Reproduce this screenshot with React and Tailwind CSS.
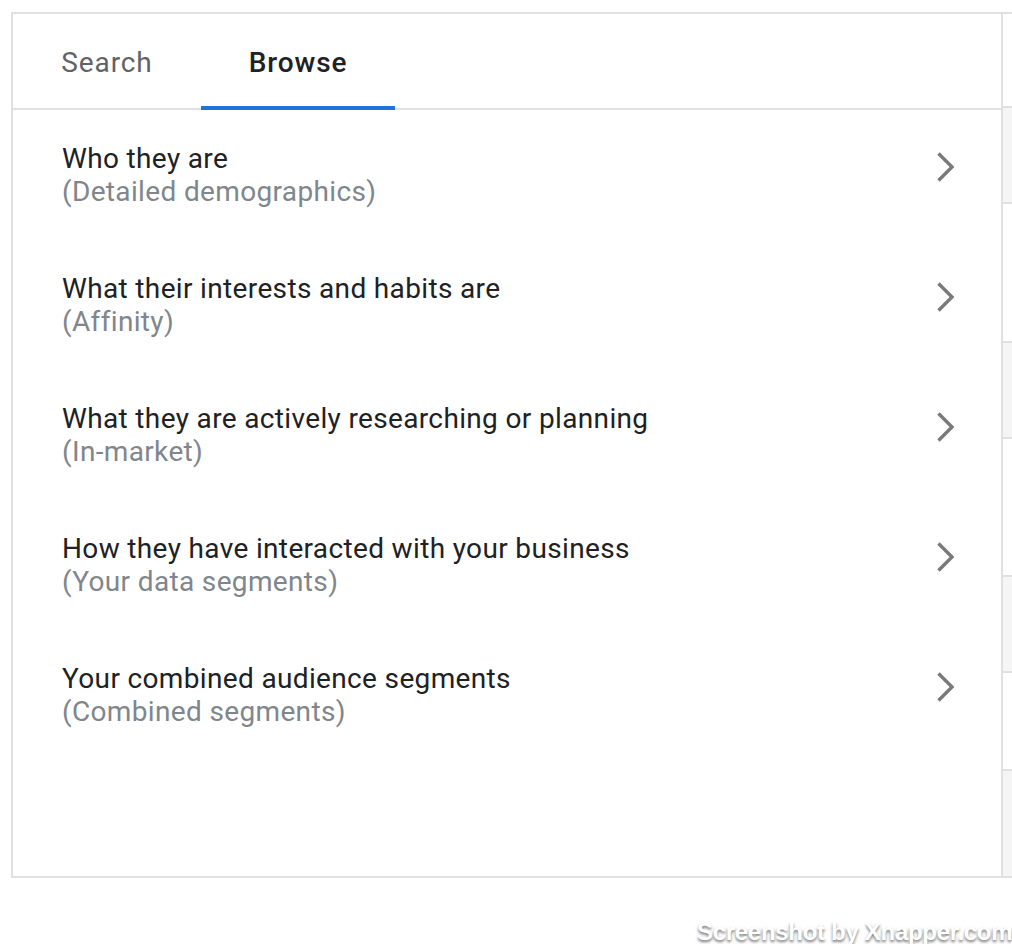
import React, { useState } from "react";

const rows = [
  { title: "Who they are", sub: "(Detailed demographics)" },
  { title: "What their interests and habits are", sub: "(Affinity)" },
  { title: "What they are actively researching or planning", sub: "(In-market)" },
  { title: "How they have interacted with your business", sub: "(Your data segments)" },
  { title: "Your combined audience segments", sub: "(Combined segments)" },
];

// bands of the next panel peeking out at the right edge
const strip = [
  { h: "h-[96px]", gray: true },
  { h: "h-[139px]", gray: false },
  { h: "h-[96px]", gray: true },
  { h: "h-[138px]", gray: false },
  { h: "h-[96px]", gray: true },
  { h: "h-[98px]", gray: false },
  { h: "flex-1", gray: true },
];

const Chevron = () => (
  <svg width="19" height="32" viewBox="0 0 19 32" className="-mt-[16px] mr-[46px]">
    <path d="M2.5 2.5L16 16 2.5 29.5" fill="none" stroke="#7a7a7a" strokeWidth="3.4" />
  </svg>
);

const App = () => {
  const [tab, setTab] = useState("browse");

  return (
    <div
      className="relative w-[1012px] h-[944px] bg-white overflow-hidden pt-[12px] pl-[11px]"
      style={{ fontFamily: "Roboto, 'Noto Sans', sans-serif" }}
    >
      <div className="flex w-[1040px] h-[866px] border-t-2 border-l-2 border-b-2 border-[#e0e0e0]">
        <div className="w-[990px] shrink-0 flex flex-col border-r-2 border-[#e0e0e0]">
          <div className="flex h-[96px] shrink-0 border-b-2 border-[#e0e0e0]">
            <button
              onClick={() => setTab("search")}
              className={`relative w-[188px] h-full flex items-center justify-center pt-[3px] text-[28px] tracking-[0.9px] ${
                tab === "search" ? "text-[#202124] font-medium" : "text-[#5f6368]"
              }`}
            >
              Search
              {tab === "search" && (
                <span className="absolute left-0 right-0 -bottom-[2px] h-[4px] bg-[#1f74d6]" />
              )}
            </button>
            <button
              onClick={() => setTab("browse")}
              className={`relative w-[194px] h-full flex items-center justify-center pt-[3px] text-[28px] tracking-[0.9px] ${
                tab === "browse" ? "text-[#202124] font-medium" : "text-[#5f6368]"
              }`}
            >
              Browse
              {tab === "browse" && (
                <span className="absolute left-0 right-0 -bottom-[2px] h-[4px] bg-[#1f74d6]" />
              )}
            </button>
          </div>

          <div className="flex flex-col">
            {rows.map((row, index) => (
              <div key={index} className="h-[130px] flex items-center justify-between pl-[49px] cursor-pointer">
                <div className="flex flex-col">
                  <span className="text-[28px] leading-[33px] text-[#202124] tracking-[0.35px]">{row.title}</span>
                  <span className="text-[28px] leading-[33px] text-[#80868b] tracking-[0.35px]">{row.sub}</span>
                </div>
                <Chevron />
              </div>
            ))}
          </div>
        </div>

        <div className="flex-1 flex flex-col">
          <div className="h-[94px] shrink-0 border-b-2 border-[#e0e0e0]" />
          {strip.map((band, index) => (
            <div
              key={index}
              className={`${band.h} ${band.gray ? "bg-[#f5f5f5]" : "bg-white"} ${
                index < strip.length - 1 ? "border-b-2 border-[#e0e0e0]" : ""
              }`}
            />
          ))}
        </div>
      </div>

      <div
        className="absolute left-[697px] top-[914px] whitespace-nowrap text-[24px] font-bold text-white tracking-[-0.3px]"
        style={{ fontFamily: "'Liberation Sans', Arial, sans-serif", textShadow: "0 2px 3px rgba(0,0,0,0.55)" }}
      >
        Screenshot by Xnapper.com
      </div>
    </div>
  );
};

export default App;
